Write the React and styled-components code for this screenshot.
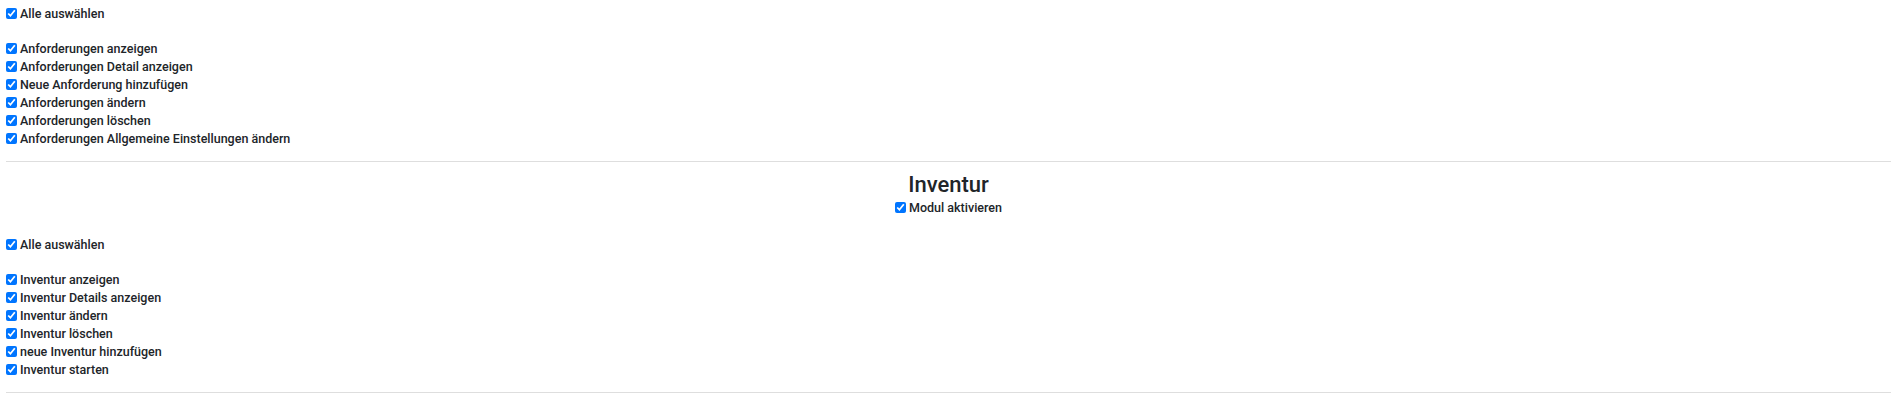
import React from "react";
import styled, { createGlobalStyle } from "styled-components";

const GlobalStyle = createGlobalStyle`
  body {
    margin: 0;
    background: #fff;
    font-family: Roboto, "Liberation Sans", sans-serif;
    color: #212529;
  }
`;

const Page = styled.div`
  padding: 4px 4px 0 6px;
`;

const Section = styled.section`
  display: flex;
  flex-direction: column;
`;

const ModuleHead = styled.div`
  display: flex;
  flex-direction: column;
  align-items: center;
  padding-top: 9px;
  margin-bottom: 19px;
`;

const Title = styled.h3`
  margin: 0;
  font-size: 22px;
  line-height: 27px;
  font-weight: 500;
  color: #212529;
`;

const List = styled.div`
  display: flex;
  flex-direction: column;
  margin-top: ${(p) => (p.$spaced ? "17px" : "0")};
`;

const Row = styled.label`
  display: flex;
  align-items: center;
  height: 18.1px;
  font-size: 12.5px;
  font-weight: 500;
  color: #212529;
  white-space: nowrap;
`;

const Box = styled.input.attrs({ type: "checkbox", defaultChecked: true })`
  width: 11px;
  height: 11px;
  margin: 0 3px 0 0;
  accent-color: #0075ff;
`;

const Divider = styled.hr`
  border: 0;
  border-top: 1px solid #dedede;
  margin: 13.5px 0 0 0;
`;

const Check = ({ children }) => (
  <Row>
    <Box />
    {children}
  </Row>
);

const PermissionBlock = ({ items }) => (
  <Section>
    <Check>Alle auswählen</Check>
    <List $spaced>
      {items.map((t) => (
        <Check key={t}>{t}</Check>
      ))}
    </List>
    <Divider />
  </Section>
);

const anforderungen = [
  "Anforderungen anzeigen",
  "Anforderungen Detail anzeigen",
  "Neue Anforderung hinzufügen",
  "Anforderungen ändern",
  "Anforderungen löschen",
  "Anforderungen Allgemeine Einstellungen ändern",
];

const inventur = [
  "Inventur anzeigen",
  "Inventur Details anzeigen",
  "Inventur ändern",
  "Inventur löschen",
  "neue Inventur hinzufügen",
  "Inventur starten",
];

export default function App() {
  return (
    <Page>
      <GlobalStyle />
      <PermissionBlock items={anforderungen} />
      <ModuleHead>
        <Title>Inventur</Title>
        <Check>Modul aktivieren</Check>
      </ModuleHead>
      <PermissionBlock items={inventur} />
    </Page>
  );
}
